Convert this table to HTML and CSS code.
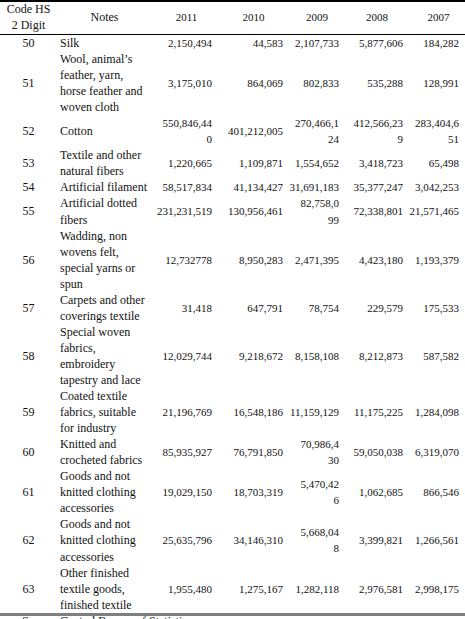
FILE: index.html
```html
<!DOCTYPE html>
<html lang="en">

<head>
    <meta charset="UTF-8">
    <meta name="viewport" content="width=device-width, initial-scale=1.0">
    <title>Textile Exports by HS Code</title>
    <link rel="stylesheet" href="styles.css">
</head>

<body>
    <table class="trade-table">
        <colgroup>
            <col class="col-code">
            <col class="col-notes">
            <col class="col-2011">
            <col class="col-2010">
            <col class="col-2009">
            <col class="col-2008">
            <col class="col-2007">
        </colgroup>
        <thead>
            <tr>
                <th>Code HS<br>2 Digit</th>
                <th>Notes</th>
                <th class="year">2011</th>
                <th class="year">2010</th>
                <th class="year">2009</th>
                <th class="year">2008</th>
                <th class="year">2007</th>
            </tr>
        </thead>
        <tbody>
            <tr>
                <td class="code">50</td>
                <td class="note">Silk</td>
                <td class="num">2,150,494</td>
                <td class="num">44,583</td>
                <td class="num">2,107,733</td>
                <td class="num">5,877,606</td>
                <td class="num">184,282</td>
            </tr>
            <tr>
                <td class="code">51</td>
                <td class="note">Wool, animal’s feather, yarn, horse feather and woven cloth</td>
                <td class="num">3,175,010</td>
                <td class="num">864,069</td>
                <td class="num">802,833</td>
                <td class="num">535,288</td>
                <td class="num">128,991</td>
            </tr>
            <tr>
                <td class="code">52</td>
                <td class="note">Cotton</td>
                <td class="num">550,846,44<br>0</td>
                <td class="num">401,212,005</td>
                <td class="num">270,466,1<br>24</td>
                <td class="num">412,566,23<br>9</td>
                <td class="num">283,404,6<br>51</td>
            </tr>
            <tr>
                <td class="code">53</td>
                <td class="note">Textile and other natural fibers</td>
                <td class="num">1,220,665</td>
                <td class="num">1,109,871</td>
                <td class="num">1,554,652</td>
                <td class="num">3,418,723</td>
                <td class="num">65,498</td>
            </tr>
            <tr>
                <td class="code">54</td>
                <td class="note">Artificial filament</td>
                <td class="num">58,517,834</td>
                <td class="num">41,134,427</td>
                <td class="num">31,691,183</td>
                <td class="num">35,377,247</td>
                <td class="num">3,042,253</td>
            </tr>
            <tr>
                <td class="code">55</td>
                <td class="note">Artificial dotted fibers</td>
                <td class="num">231,231,519</td>
                <td class="num">130,956,461</td>
                <td class="num">82,758,0<br>99</td>
                <td class="num">72,338,801</td>
                <td class="num">21,571,465</td>
            </tr>
            <tr>
                <td class="code">56</td>
                <td class="note">Wadding, non wovens felt, special yarns or spun</td>
                <td class="num">12,732778</td>
                <td class="num">8,950,283</td>
                <td class="num">2,471,395</td>
                <td class="num">4,423,180</td>
                <td class="num">1,193,379</td>
            </tr>
            <tr>
                <td class="code">57</td>
                <td class="note">Carpets and other coverings textile</td>
                <td class="num">31,418</td>
                <td class="num">647,791</td>
                <td class="num">78,754</td>
                <td class="num">229,579</td>
                <td class="num">175,533</td>
            </tr>
            <tr>
                <td class="code">58</td>
                <td class="note">Special woven fabrics, embroidery tapestry and lace</td>
                <td class="num">12,029,744</td>
                <td class="num">9,218,672</td>
                <td class="num">8,158,108</td>
                <td class="num">8,212,873</td>
                <td class="num">587,582</td>
            </tr>
            <tr>
                <td class="code">59</td>
                <td class="note">Coated textile fabrics, suitable for industry</td>
                <td class="num">21,196,769</td>
                <td class="num">16,548,186</td>
                <td class="num">11,159,129</td>
                <td class="num">11,175,225</td>
                <td class="num">1,284,098</td>
            </tr>
            <tr>
                <td class="code">60</td>
                <td class="note">Knitted and crocheted fabrics</td>
                <td class="num">85,935,927</td>
                <td class="num">76,791,850</td>
                <td class="num">70,986,4<br>30</td>
                <td class="num">59,050,038</td>
                <td class="num">6,319,070</td>
            </tr>
            <tr>
                <td class="code">61</td>
                <td class="note">Goods and not knitted clothing accessories</td>
                <td class="num">19,029,150</td>
                <td class="num">18,703,319</td>
                <td class="num">5,470,42<br>6</td>
                <td class="num">1,062,685</td>
                <td class="num">866,546</td>
            </tr>
            <tr>
                <td class="code">62</td>
                <td class="note">Goods and not knitted clothing accessories</td>
                <td class="num">25,635,796</td>
                <td class="num">34,146,310</td>
                <td class="num">5,668,04<br>8</td>
                <td class="num">3,399,821</td>
                <td class="num">1,266,561</td>
            </tr>
            <tr>
                <td class="code">63</td>
                <td class="note">Other finished textile goods, finished textile</td>
                <td class="num">1,955,480</td>
                <td class="num">1,275,167</td>
                <td class="num">1,282,118</td>
                <td class="num">2,976,581</td>
                <td class="num">2,998,175</td>
            </tr>
        </tbody>
    </table>

    <div class="source">
        <span class="source-label">Source :</span>
        <span>Central Bureau of Statistics</span>
    </div>
</body>

</html>
```

FILE: styles.css
```css
* {
    box-sizing: border-box;
    margin: 0;
    padding: 0;
}

body {
    font-family: 'Liberation Serif', 'Times New Roman', serif;
    font-size: 12px;
    color: #111;
    background: #fff;
}

.trade-table {
    width: 465px;
    table-layout: fixed;
    border-collapse: separate;
    border-spacing: 0;
    border-top: 2px solid #000;
    border-bottom: 3px solid #7f7f7f;
}

.col-code { width: 57px; }
.col-notes { width: 95px; }
.col-2011 { width: 63px; }
.col-2010 { width: 71px; }
.col-2009 { width: 56px; }
.col-2008 { width: 64px; }
.col-2007 { width: 59px; }

.trade-table th {
    font-weight: normal;
    line-height: 15.5px;
    padding: 0 3px 1px;
    text-align: center;
    vertical-align: middle;
    border-bottom: 1px solid #000;
}

.trade-table th.year {
    font-size: 11px;
    padding: 0 0 1px 6px;
}

.trade-table td {
    line-height: 16.05px;
    padding: 0 3px;
    vertical-align: middle;
}

.trade-table td.code {
    text-align: center;
}

.trade-table td.note {
    text-align: left;
}

.trade-table td.num {
    text-align: right;
    font-size: 11px;
    white-space: nowrap;
}

.trade-table td:last-child {
    padding-right: 6px;
}

.source {
    display: flex;
    padding-left: 22px;
    line-height: 10px;
}

.source-label {
    width: 38px;
}
```
